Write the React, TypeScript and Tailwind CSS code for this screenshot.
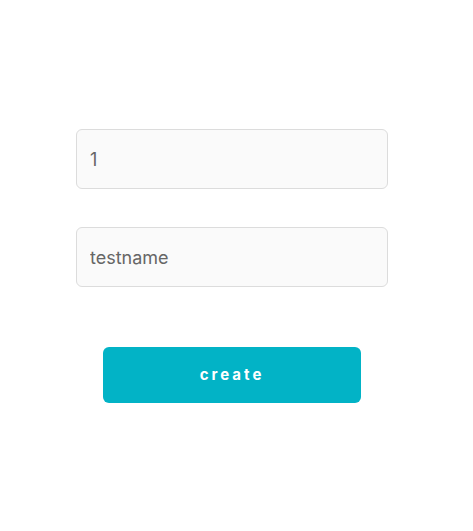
export default function App() {
  return (
    <div className="min-h-[531px] bg-white" style={{}}>
      <div className="w-[312px] ml-[76px] pt-[129px] flex flex-col font-['Inter','Roboto',sans-serif]">
        <input
          defaultValue="1"
          className="h-[60px] w-full rounded-md border border-[#dcdcdc] bg-[#fafafa] px-[13px] text-[18px] text-[#666] outline-none"
        />
        <input
          defaultValue="testname"
          className="mt-[38px] h-[60px] w-full rounded-md border border-[#dcdcdc] bg-[#fafafa] px-[13px] text-[18px] text-[#666] outline-none"
        />
        <button className="mt-[60px] mx-auto h-[56px] w-[258px] rounded-md bg-[#02b3c6] text-[15px] font-bold tracking-[3px] text-white">
          create
        </button>
      </div>
    </div>
  )
}
